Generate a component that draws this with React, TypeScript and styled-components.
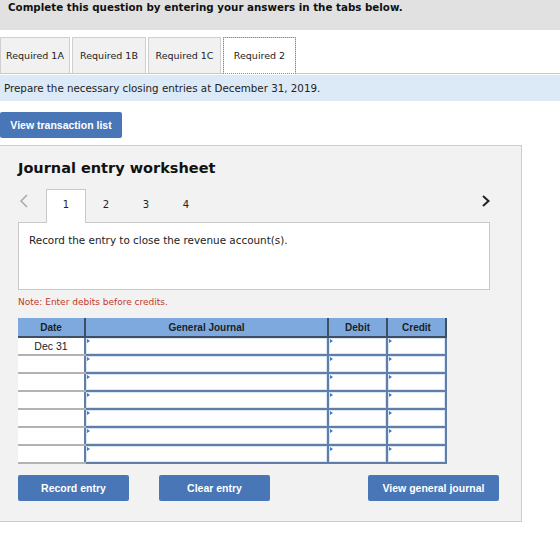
import React from "react";
import styled, { createGlobalStyle } from "styled-components";

const GlobalStyle = createGlobalStyle`
  html, body { margin: 0; padding: 0; background: #ffffff; }
  body { font-family: "DejaVu Sans", Verdana, sans-serif; color: #222; }
  * { box-sizing: border-box; }
`;

const Page = styled.div`
  width: 560px;
  height: 536px;
  overflow: hidden;
`;

const TopBar = styled.div`
  height: 30px;
  background: #e1e1e1;
  padding: 1px 0 0 8px;
  font-weight: bold;
  font-size: 10.3px;
  color: #111;
`;

const TabStrip = styled.div`
  margin-top: 7px;
  display: flex;
  gap: 2px;
  height: 37px;
  border-bottom: 1px solid #c9c9c9;
`;

const Tab = styled.div<{ $active?: boolean; $width: number }>`
  width: ${(p) => p.$width}px;
  height: 36px;
  display: flex;
  align-items: center;
  justify-content: center;
  font-size: 9.5px;
  color: #222;
  background: ${(p) => (p.$active ? "#ffffff" : "#f1f1f1")};
  border: 1px solid #cfcfcf;
  border-bottom: none;
  ${(p) =>
    p.$active
      ? "outline: 1px dotted #7d8cb0; outline-offset: -1px; height: 37px; margin-bottom: -1px; padding-bottom: 1px;"
      : ""}
`;

const InfoBar = styled.div`
  margin-top: 1px;
  height: 26px;
  background: #dce9f6;
  display: flex;
  align-items: center;
  padding-left: 4px;
  font-size: 10.3px;
  color: #222;
`;

const ActionButton = styled.button<{ $width: number }>`
  width: ${(p) => p.$width}px;
  height: 26px;
  border: none;
  border-radius: 2px;
  background: #4876b7;
  color: #ffffff;
  font-family: "Liberation Sans", Arial, sans-serif;
  font-weight: bold;
  font-size: 10.5px;
  padding: 0;
  cursor: pointer;
`;

const TopButtonRow = styled.div`
  margin-top: 11px;
  display: flex;
`;

const Panel = styled.div`
  margin-top: 7px;
  margin-left: -1px;
  width: 523px;
  height: 377px;
  background: #f2f2f2;
  border: 1px solid #cccccc;
  padding: 14px 31px 0 18px;
`;

const Title = styled.div`
  font-weight: bold;
  font-size: 14.5px;
  line-height: 17px;
  color: #111;
  height: 29px;
`;

const NavRow = styled.div`
  display: flex;
  align-items: stretch;
  height: 33px;
`;

const Arrow = styled.div<{ $dim?: boolean; $end?: boolean }>`
  width: 28px;
  display: flex;
  align-items: center;
  justify-content: ${(p) => (p.$end ? "flex-end" : "flex-start")};
  padding: 0 0 10px ${(p) => (p.$end ? 0 : 1)}px;
  color: ${(p) => (p.$dim ? "#a9a9a9" : "#222")};
`;

const StepTab = styled.div<{ $active?: boolean }>`
  width: 40px;
  display: flex;
  align-items: center;
  justify-content: center;
  padding-bottom: 4px;
  font-size: 10px;
  color: #222;
  background: ${(p) => (p.$active ? "#ffffff" : "transparent")};
  border: 1px solid ${(p) => (p.$active ? "#c9c9c9" : "transparent")};
  border-bottom: none;
  margin-bottom: -1px;
  position: relative;
  z-index: 1;
`;

const Spacer = styled.div`
  flex: 1;
`;

const ContentBox = styled.div`
  height: 68px;
  background: #ffffff;
  border: 1px solid #c9c9c9;
  padding: 11px 10px;
  font-size: 10.4px;
  color: #222;
`;

const Note = styled.div`
  margin-top: 7px;
  font-size: 9px;
  line-height: 11px;
  color: #c0392b;
  height: 21px;
`;

const Table = styled.table`
  width: 428px;
  border-collapse: collapse;
  table-layout: fixed;
  font-family: "Liberation Sans", Arial, sans-serif;
`;

const HeadCell = styled.th`
  height: 19px;
  padding: 0;
  background: #7ea9de;
  font-size: 10px;
  font-weight: bold;
  color: #1a1f26;
  border-right: 2px solid #3e4f63;
  border-bottom: 2px solid #3e4f63;
  text-align: center;
`;

const DateCell = styled.td`
  height: 18px;
  padding: 0;
  background: #ffffff;
  border-bottom: 2px solid #b3b3b3;
  font-size: 10.5px;
  color: #222;
  text-align: center;
`;

const InputCell = styled.td`
  height: 18px;
  padding: 0;
  background: #ffffff;
  border: 2px solid #5f7fa9;
  box-shadow: inset 0 0 0 1px #dce6f3;
  position: relative;
  &::before {
    content: "";
    position: absolute;
    left: 1px;
    top: 1px;
    width: 0;
    height: 0;
    border-top: 2px solid transparent;
    border-bottom: 2px solid transparent;
    border-left: 3px solid #3a78c8;
  }
`;

const BottomButtons = styled.div`
  margin-top: 11px;
  display: flex;
  align-items: center;
`;

const ChevronLeft = () => (
  <svg width="10" height="14" viewBox="0 0 10 14">
    <path d="M8 1 L2 7 L8 13" fill="none" stroke="currentColor" strokeWidth="1.5" />
  </svg>
);

const ChevronRight = () => (
  <svg width="10" height="14" viewBox="0 0 10 14">
    <path d="M3 2 L8.5 7 L3 12" fill="none" stroke="currentColor" strokeWidth="2" />
  </svg>
);

export default function App() {
  const rows = [0, 1, 2, 3, 4, 5, 6];
  return (
    <Page>
      <GlobalStyle />
      <TopBar>Complete this question by entering your answers in the tabs below.</TopBar>
      <TabStrip>
        <Tab $width={70}>Required 1A</Tab>
        <Tab $width={74}>Required 1B</Tab>
        <Tab $width={73}>Required 1C</Tab>
        <Tab $width={73} $active>
          Required 2
        </Tab>
      </TabStrip>
      <InfoBar>Prepare the necessary closing entries at December 31, 2019.</InfoBar>
      <TopButtonRow>
        <ActionButton $width={122}>View transaction list</ActionButton>
      </TopButtonRow>
      <Panel>
        <Title>Journal entry worksheet</Title>
        <NavRow>
          <Arrow $dim>
            <ChevronLeft />
          </Arrow>
          <StepTab $active>1</StepTab>
          <StepTab>2</StepTab>
          <StepTab>3</StepTab>
          <StepTab>4</StepTab>
          <Spacer />
          <Arrow $end>
            <ChevronRight />
          </Arrow>
        </NavRow>
        <ContentBox>Record the entry to close the revenue account(s).</ContentBox>
        <Note>Note: Enter debits before credits.</Note>
        <Table>
          <colgroup>
            <col style={{ width: 67 }} />
            <col style={{ width: 243 }} />
            <col style={{ width: 59 }} />
            <col style={{ width: 59 }} />
          </colgroup>
          <thead>
            <tr>
              <HeadCell>Date</HeadCell>
              <HeadCell>General Journal</HeadCell>
              <HeadCell>Debit</HeadCell>
              <HeadCell>Credit</HeadCell>
            </tr>
          </thead>
          <tbody>
            {rows.map((r) => (
              <tr key={r}>
                <DateCell>{r === 0 ? "Dec 31" : ""}</DateCell>
                <InputCell />
                <InputCell />
                <InputCell />
              </tr>
            ))}
          </tbody>
        </Table>
        <BottomButtons>
          <ActionButton $width={111}>Record entry</ActionButton>
          <ActionButton $width={111} style={{ marginLeft: 30 }}>
            Clear entry
          </ActionButton>
          <Spacer />
          <ActionButton $width={131} style={{ marginRight: -9 }}>
            View general journal
          </ActionButton>
        </BottomButtons>
      </Panel>
    </Page>
  );
}
